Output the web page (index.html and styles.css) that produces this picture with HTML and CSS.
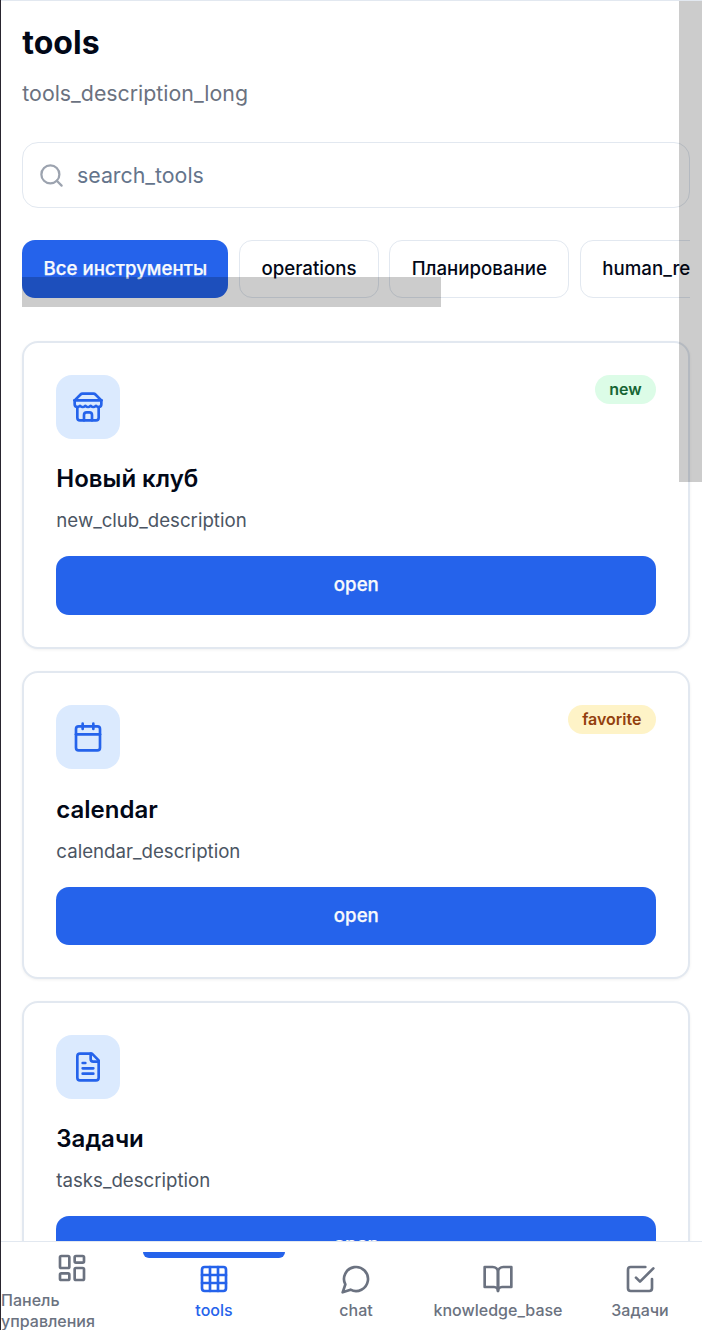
FILE: index.html
```html
<!DOCTYPE html>
<html lang="ru">
<head>
<meta charset="utf-8">
<title>tools</title>
<link rel="stylesheet" href="styles.css">
</head>
<body>
<div class="app">
  <main class="content">
    <h1 class="title">tools</h1>
    <p class="subtitle">tools_description_long</p>
    <div class="search">
      <svg class="search-icon" viewBox="0 0 24 24"><circle cx="11" cy="11" r="8"/><path d="m21 21-4.3-4.3"/></svg>
      <span>search_tools</span>
    </div>
    <div class="chips">
      <button class="chip chip-all">Все инструменты</button>
      <button class="chip chip-operations">operations</button>
      <button class="chip chip-planning">Планирование</button>
      <button class="chip">human_resources</button>
      <div class="scroll-x"></div>
    </div>
    <div class="cards">
      <section class="card">
        <div class="card-head">
          <div class="tile"><svg class="icon" viewBox="0 0 24 24"><path d="m2 7 4.41-4.41A2 2 0 0 1 7.83 2h8.34a2 2 0 0 1 1.42.59L22 7"/><path d="M4 12v8a2 2 0 0 0 2 2h12a2 2 0 0 0 2-2v-8"/><path d="M15 22v-4a2 2 0 0 0-2-2h-2a2 2 0 0 0-2 2v4"/><path d="M2 7h20"/><path d="M22 7v3a2 2 0 0 1-2 2a2.700 2.700 0 0 1-1.590-.63.7.7 0 0 0-.82 0A2.700 2.700 0 0 1 16 12a2.700 2.700 0 0 1-1.590-.63.7.7 0 0 0-.82 0A2.700 2.700 0 0 1 12 12a2.700 2.700 0 0 1-1.590-.63.7.7 0 0 0-.82 0A2.700 2.700 0 0 1 8 12a2.700 2.700 0 0 1-1.590-.63.7.7 0 0 0-.82 0A2.700 2.700 0 0 1 4 12a2 2 0 0 1-2-2V7"/></svg></div>
          <span class="badge badge-new">new</span>
        </div>
        <h2 class="card-title">Новый клуб</h2>
        <p class="card-text">new_club_description</p>
        <button class="open">open</button>
      </section>
      <section class="card card-calendar">
        <div class="card-head">
          <div class="tile"><svg class="icon" viewBox="0 0 24 24"><path d="M8 2v4M16 2v4"/><rect x="3" y="4" width="18" height="18" rx="2"/><path d="M3 10h18"/></svg></div>
          <span class="badge badge-favorite">favorite</span>
        </div>
        <h2 class="card-title">calendar</h2>
        <p class="card-text">calendar_description</p>
        <button class="open">open</button>
      </section>
      <section class="card">
        <div class="card-head">
          <div class="tile"><svg class="icon" viewBox="0 0 24 24"><path d="M15 2H6a2 2 0 0 0-2 2v16a2 2 0 0 0 2 2h12a2 2 0 0 0 2-2V7Z"/><path d="M14 2v4a2 2 0 0 0 2 2h4M10 9H8M16 13H8M16 17H8"/></svg></div>
        </div>
        <h2 class="card-title">Задачи</h2>
        <p class="card-text">tasks_description</p>
        <button class="open">open</button>
      </section>
    </div>
  </main>
  <nav class="nav">
    <a class="nav-item nav-item-tall"><svg class="icon" viewBox="0 0 24 24"><rect x="3" y="3" width="7" height="9" rx="1"/><rect x="14" y="3" width="7" height="5" rx="1"/><rect x="14" y="12" width="7" height="9" rx="1"/><rect x="3" y="16" width="7" height="5" rx="1"/></svg><span class="nav-label nav-label-wide">Панель управления</span></a>
    <a class="nav-item active"><svg class="icon" viewBox="0 0 24 24"><rect x="3" y="3" width="18" height="18" rx="2"/><path d="M3 9h18M3 15h18M9 3v18M15 3v18"/></svg><span class="nav-label">tools</span></a>
    <a class="nav-item"><svg class="icon" viewBox="0 0 24 24"><path d="M7.900 20A9 9 0 1 0 4 16.100L2 22Z"/></svg><span class="nav-label">chat</span></a>
    <a class="nav-item"><svg class="icon" viewBox="0 0 24 24"><path d="M2 3h6a4 4 0 0 1 4 4v14a3 3 0 0 0-3-3H2z"/><path d="M22 3h-6a4 4 0 0 0-4 4v14a3 3 0 0 1 3-3h7z"/></svg><span class="nav-label">knowledge_base</span></a>
    <a class="nav-item"><svg class="icon" viewBox="0 0 24 24"><path d="m9 11 3 3L22 4"/><path d="M21 12v7a2 2 0 0 1-2 2H5a2 2 0 0 1-2-2V5a2 2 0 0 1 2-2h11"/></svg><span class="nav-label">Задачи</span></a>
  </nav>
  <div class="scroll-y"></div>
</div>
</body>
</html>
```
FILE: styles.css
```css
* { box-sizing: border-box; }
body { margin: 0; background: #fff; color: #020817; font-family: Inter, "Noto Sans", sans-serif; }
h1, h2, p { margin: 0; }
button { font: inherit; }
svg { fill: none; stroke: currentColor; stroke-width: 2; stroke-linecap: round; stroke-linejoin: round; flex: none; }
.app { position: relative; height: 1330px; overflow: hidden; display: flex; flex-direction: column; border-left: 1px solid #29252f; }
.content { flex: 1; min-height: 0; overflow: hidden; border-top: 1px solid #e2e8f0; padding: 21px 11.67px 0 21.33px; }
.title { font-size: 32px; line-height: 42px; font-weight: 700; }
.subtitle { margin-top: 13px; font-size: 21.33px; line-height: 32px; color: #6b7280; }
.search { margin-top: 33px; height: 66px; border: 1px solid #e2e8f0; border-radius: 16px; display: flex; align-items: center; gap: 12px; padding-left: 14.67px; font-size: 21.33px; color: #64748b; }
.search-icon { width: 27px; height: 27px; color: #9ca3af; }
.chips { position: relative; margin-top: 32px; height: 67px; display: flex; align-items: flex-start; gap: 11px; overflow: hidden; }
.chip { flex: none; height: 58px; padding: 0 21.5px 2px 21px; border: 1px solid #e2e8f0; border-radius: 13px; background: #fff; color: #020817; font-size: 18.67px; font-weight: 500; white-space: nowrap; }
.chip-all { width: 206px; padding: 0 0 2px; border: 0; background: #2563eb; color: #f8fafc; -webkit-text-stroke: .25px #f8fafc; }
.chip-operations { width: 140px; padding: 0 .7px 2px 0; }
.chip-planning { width: 180px; padding: 0 0 2px; margin-left: -1px; }
.scroll-x { position: absolute; left: 0; top: 37px; width: 419px; height: 30px; background: rgba(0,0,0,.2); }
.cards { margin-top: 34px; display: flex; flex-direction: column; gap: 22px; }
.card { height: 308px; flex: none; padding: 32px; border: 2px solid #e2e8f0; border-radius: 16px; background: #fff; box-shadow: 0 1px 3px rgba(0,0,0,.06); }
.card-head { display: flex; justify-content: space-between; align-items: flex-start; height: 64px; }
.tile { width: 64px; height: 64px; border-radius: 16px; display: grid; place-items: center; background: #dbeafe; color: #2563eb; }
.icon { width: 32px; height: 32px; }
.badge { height: 29px; line-height: 29px; padding-right: 1px; border-radius: 15px; font-size: 16px; font-weight: 600; text-align: center; }
.badge-new { width: 61px; background: #dcfce7; color: #166534; }
.badge-favorite { width: 88px; background: #fef3c7; color: #92400e; }
.card-title { margin-top: 21px; font-size: 24px; line-height: 37px; font-weight: 600; }
.card-text { margin-top: 9px; font-size: 18.67px; line-height: 30px; color: #4b5563; }
.open { display: block; width: 100%; height: 59px; margin-top: 20px; padding: 0 0 2px; border: 0; border-radius: 13px; background: #2563eb; color: #f8fafc; font-size: 18.67px; font-weight: 500; -webkit-text-stroke: .25px #f8fafc; }
.card-calendar .card-title { margin-top: 22px; }
.card-calendar .open { height: 58px; padding-bottom: 1px; }
.nav { flex: none; height: 89px; border-top: 1px solid #e2e8f0; display: grid; grid-template-columns: repeat(5, 142px); grid-template-rows: 88px; background: #fff; }
.nav-item { position: relative; display: flex; flex-direction: column; align-items: center; justify-content: center; padding-top: 11.67px; gap: 5px; color: #6b7280; font-size: 16px; line-height: 21.33px; font-weight: 500; }
.nav-item-tall { justify-content: flex-start; padding-top: 10px; gap: 6px; }
.nav-label-wide { width: 100%; }
.active { color: #2563eb; }
.active::before { content: ""; position: absolute; top: 10px; left: 0; width: 100%; height: 6px; border-radius: 0 0 6px 6px; background: #2563eb; }
.scroll-y { position: absolute; top: 1px; right: 0; width: 23px; height: 481px; background: rgba(0,0,0,.2); }
```
